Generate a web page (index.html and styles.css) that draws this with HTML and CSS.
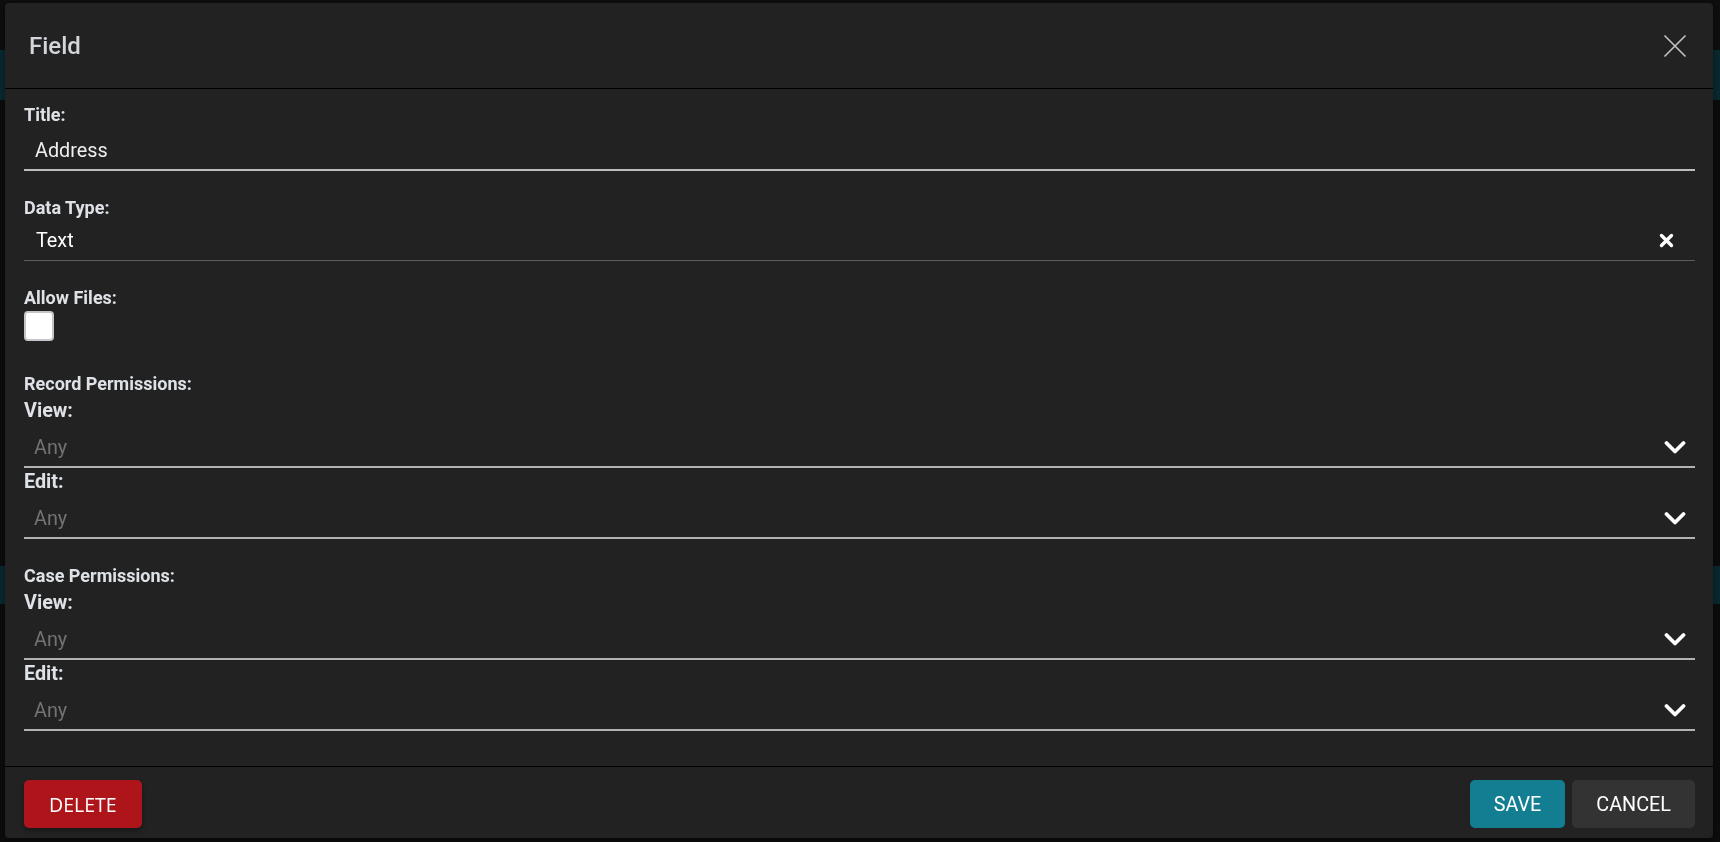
FILE: index.html
```html
<!DOCTYPE html>
<html lang="en">
<head>
    <meta charset="UTF-8">
    <meta name="viewport" content="width=device-width, initial-scale=1.0">
    <title>Field</title>
    <link rel="stylesheet" href="styles.css">
</head>
<body>
    <!-- page behind the dialog -->
    <div class="app">
        <div class="app-top"></div>
        <div class="app-band"></div>
        <div class="app-rest">
            <div class="app-row"></div>
        </div>
    </div>

    <!-- field dialog -->
    <div class="overlay">
        <div class="modal">
            <div class="modal-header">
                <h2>Field</h2>
                <button class="close" title="Close">
                    <svg width="24" height="24" viewBox="0 0 24 24"><path d="M1.5 1.5 L22.5 22.5 M22.5 1.5 L1.5 22.5" stroke="#c4c4c4" stroke-width="1.6" fill="none"/></svg>
                </button>
            </div>

            <div class="modal-body">
                <div class="field">
                    <label>Title:</label>
                    <input class="text-input" type="text" value="Address">
                </div>

                <div class="field">
                    <label>Data Type:</label>
                    <div class="select select-value">
                        <span>Text</span>
                        <svg class="clear" width="15" height="15" viewBox="0 0 15 15"><path d="M2.5 2.5 L12.5 12.5 M12.5 2.5 L2.5 12.5" stroke="#fff" stroke-width="3.4" stroke-linecap="round" fill="none"/></svg>
                    </div>
                </div>

                <div class="field field-check">
                    <label>Allow Files:</label>
                    <span class="checkbox"></span>
                </div>

                <div class="field">
                    <label>Record Permissions:</label>
                    <div class="perm-label">View:</div>
                    <div class="select">
                        <span class="placeholder">Any</span>
                        <svg class="chevron" width="22" height="15" viewBox="0 0 22 15"><path d="M2.5 3 L11 11.5 L19.5 3" stroke="#fff" stroke-width="3.8" stroke-linecap="round" stroke-linejoin="round" fill="none"/></svg>
                    </div>
                    <div class="perm-label perm-edit">Edit:</div>
                    <div class="select">
                        <span class="placeholder">Any</span>
                        <svg class="chevron" width="22" height="15" viewBox="0 0 22 15"><path d="M2.5 3 L11 11.5 L19.5 3" stroke="#fff" stroke-width="3.8" stroke-linecap="round" stroke-linejoin="round" fill="none"/></svg>
                    </div>
                </div>

                <div class="field">
                    <label>Case Permissions:</label>
                    <div class="perm-label">View:</div>
                    <div class="select">
                        <span class="placeholder">Any</span>
                        <svg class="chevron" width="22" height="15" viewBox="0 0 22 15"><path d="M2.5 3 L11 11.5 L19.5 3" stroke="#fff" stroke-width="3.8" stroke-linecap="round" stroke-linejoin="round" fill="none"/></svg>
                    </div>
                    <div class="perm-label perm-edit">Edit:</div>
                    <div class="select">
                        <span class="placeholder">Any</span>
                        <svg class="chevron" width="22" height="15" viewBox="0 0 22 15"><path d="M2.5 3 L11 11.5 L19.5 3" stroke="#fff" stroke-width="3.8" stroke-linecap="round" stroke-linejoin="round" fill="none"/></svg>
                    </div>
                </div>
            </div>

            <div class="modal-footer">
                <button class="btn btn-delete">DELETE</button>
                <div class="footer-right">
                    <button class="btn btn-save">SAVE</button>
                    <button class="btn btn-cancel">CANCEL</button>
                </div>
            </div>
        </div>
    </div>
</body>
</html>
```

FILE: styles.css
```css
/* base */
body {
    margin: 0;
    height: 842px;
    overflow: hidden;
    background: #121212;
    font-family: Roboto, "Liberation Sans", sans-serif;
}

/* page behind the dialog */
.app-top {
    height: 50px;
    background: #141414;
}

.app-band {
    height: 50px;
    background: #0b3d45;
}

.app-rest {
    padding-top: 466px;
}

.app-row {
    height: 38px;
    background: #0b3d45;
}

/* dialog */
.overlay {
    position: fixed;
    inset: 0;
    background: rgba(0, 0, 0, 0.3);
}

.modal {
    position: absolute;
    top: 3px;
    left: 5px;
    right: 7px;
    bottom: 4px;
    display: flex;
    flex-direction: column;
    background: #222;
    border-radius: 4px;
    box-shadow: 0 2px 8px rgba(0, 0, 0, 0.5);
}

.modal-header {
    height: 85px;
    display: flex;
    align-items: center;
    justify-content: space-between;
    padding: 0 26px 0 24px;
    border-bottom: 1px solid #000;
}

.modal-header h2 {
    margin: 0;
    font-size: 24px;
    font-weight: 500;
    color: #d3d6da;
}

.close {
    background: none;
    border: none;
    padding: 0;
    display: flex;
    cursor: pointer;
}

.modal-body {
    flex: 1;
    padding: 15px 18px 0 19px;
}

/* fields */
.field {
    margin-bottom: 26px;
}

.field label {
    display: block;
    font-size: 18px;
    line-height: 21px;
    font-weight: 700;
    color: #dee2e6;
}

.text-input {
    display: block;
    box-sizing: border-box;
    width: 100%;
    height: 46px;
    padding: 15px 11px 8px;
    background: transparent;
    border: none;
    border-bottom: 2px solid #bdbdbd;
    outline: none;
    font-family: inherit;
    font-size: 19.8px;
    color: #eee;
}

.select {
    display: flex;
    align-items: center;
    justify-content: space-between;
    padding: 14px 9px 8px 10px;
    font-size: 19.8px;
    line-height: 21px;
    border-bottom: 2px solid #b3b3b3;
}

.select-value {
    padding: 12px 21px 9px 12px;
    color: #fff;
    border-bottom: 1px solid #5c5c5c;
}

.placeholder {
    color: #737373;
}

.field-check {
    margin-bottom: 32px;
}

.field-check label {
    margin-top: 25px;
}

.checkbox {
    display: block;
    box-sizing: border-box;
    width: 30px;
    height: 30px;
    margin-top: 3px;
    background: #fff;
    border: 2px solid #c2c6cb;
    border-radius: 4px;
}

.perm-label {
    margin-top: 5px;
    font-size: 19.8px;
    line-height: 24px;
    font-weight: 700;
    color: #dee2e6;
}

.perm-edit {
    margin-top: 2px;
}

/* footer */
.modal-footer {
    display: flex;
    justify-content: space-between;
    padding: 13px 18px 10px 19px;
    border-top: 1px solid #000;
}

.footer-right {
    display: flex;
    gap: 7px;
}

.btn {
    height: 48px;
    padding: 0 24px;
    border: none;
    border-radius: 5px;
    font-family: Roboto, "Liberation Sans", sans-serif;
    font-size: 19.8px;
    color: #fff;
    cursor: pointer;
}

.btn-delete {
    background: #ad151b;
    font-family: "Open Sans", Roboto, sans-serif;
    font-size: 19.5px;
    padding: 0 25px;
    box-shadow: 0 2px 4px rgba(0, 0, 0, 0.4);
}

.btn-save {
    background: #137e92;
}

.btn-cancel {
    background: #333;
}
```
